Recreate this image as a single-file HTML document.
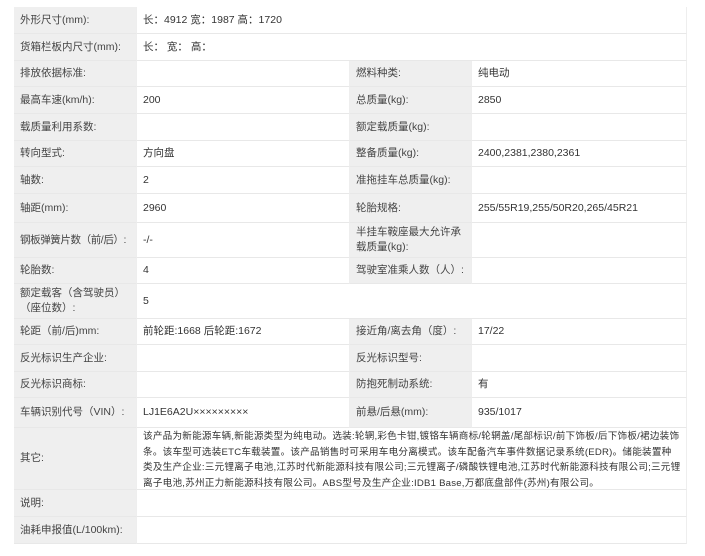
<!DOCTYPE html>
<html><head><meta charset="utf-8"><style>
body{margin:0;width:705px;height:556px;background:#fff;overflow:hidden;font-family:"Liberation Sans","Noto Sans CJK SC",sans-serif;font-size:10.5px;color:#333}
.c{position:absolute;box-sizing:border-box;padding:0 6px;display:flex;align-items:center;border-right:1px solid #eee;border-bottom:1px solid #e8e8e8;line-height:15px}
.l{background:#efefef;color:#444}
.v{background:#fff}
.o{font-size:9.6px;line-height:15.5px;white-space:nowrap;letter-spacing:0.22px;display:block;padding:1px 6px}
</style></head><body>
<div id="t"></div>
<script>
var other='<div>该产品为新能源车辆,新能源类型为纯电动。选装:轮辋,彩色卡钳,镀铬车辆商标/轮辋盖/尾部标识/前下饰板/后下饰板/裙边装饰</div><div>条。该车型可选装ETC车载装置。该产品销售时可采用车电分离模式。该车配备汽车事件数据记录系统(EDR)。储能装置种</div><div>类及生产企业:三元锂离子电池,江苏时代新能源科技有限公司;三元锂离子/磷酸铁锂电池,江苏时代新能源科技有限公司;三元锂</div><div>离子电池,苏州正力新能源科技有限公司。ABS型号及生产企业:IDB1 Base,万都底盘部件(苏州)有限公司。</div>';
var rows=[
[7,34,["外形尺寸(mm):","长：4912 宽：1987 高：1720"]],
[34,61,["货箱栏板内尺寸(mm):","长： 宽： 高："]],
[61,87,["排放依据标准:","","燃料种类:","纯电动"]],
[87,114,["最高车速(km/h):","200","总质量(kg):","2850"]],
[114,141,["载质量利用系数:","","额定载质量(kg):",""]],
[141,167,["转向型式:","方向盘","整备质量(kg):","2400,2381,2380,2361"]],
[167,194,["轴数:","2","准拖挂车总质量(kg):",""]],
[194,223,["轴距(mm):","2960","轮胎规格:","255/55R19,255/50R20,265/45R21"]],
[223,258,["<span style=\"white-space:nowrap;letter-spacing:-0.4px\">钢板弹簧片数（前/后）:</span>","-/-","半挂车鞍座最大允许承载质量(kg):",""]],
[258,284,["轮胎数:","4","驾驶室准乘人数（人）:",""]],
[284,319,["额定载客（含驾驶员）（座位数）:","5"]],
[319,345,["轮距（前/后)mm:","前轮距:1668 后轮距:1672","接近角/离去角（度）:","17/22"]],
[345,372,["反光标识生产企业:","","反光标识型号:",""]],
[372,398,["反光标识商标:","","防抱死制动系统:","有"]],
[398,428,["车辆识别代号（VIN）:","LJ1E6A2U×××××××××","前悬/后悬(mm):","935/1017"]],
[428,490,["其它:",other]],
[490,517,["说明:",""]],
[517,544,["油耗申报值(L/100km):",""]]
];
var h='',xs=[14,137,350,472,687];
rows.forEach(function(r,ri){var y=r[0],H=r[1]-r[0],c=r[2];
 var bounds=c.length==4?xs:[14,137,687];
 for(var i=0;i<c.length;i++){var cls=i%2==0?'l':'v';
  if(ri==15&&i==1)cls+=' o';
  h+='<div class="c '+cls+'" style="left:'+bounds[i]+'px;top:'+y+'px;width:'+(bounds[i+1]-bounds[i])+'px;height:'+H+'px;">'+c[i]+'</div>';}
});
document.getElementById('t').innerHTML=h;
</script>
</body></html>
